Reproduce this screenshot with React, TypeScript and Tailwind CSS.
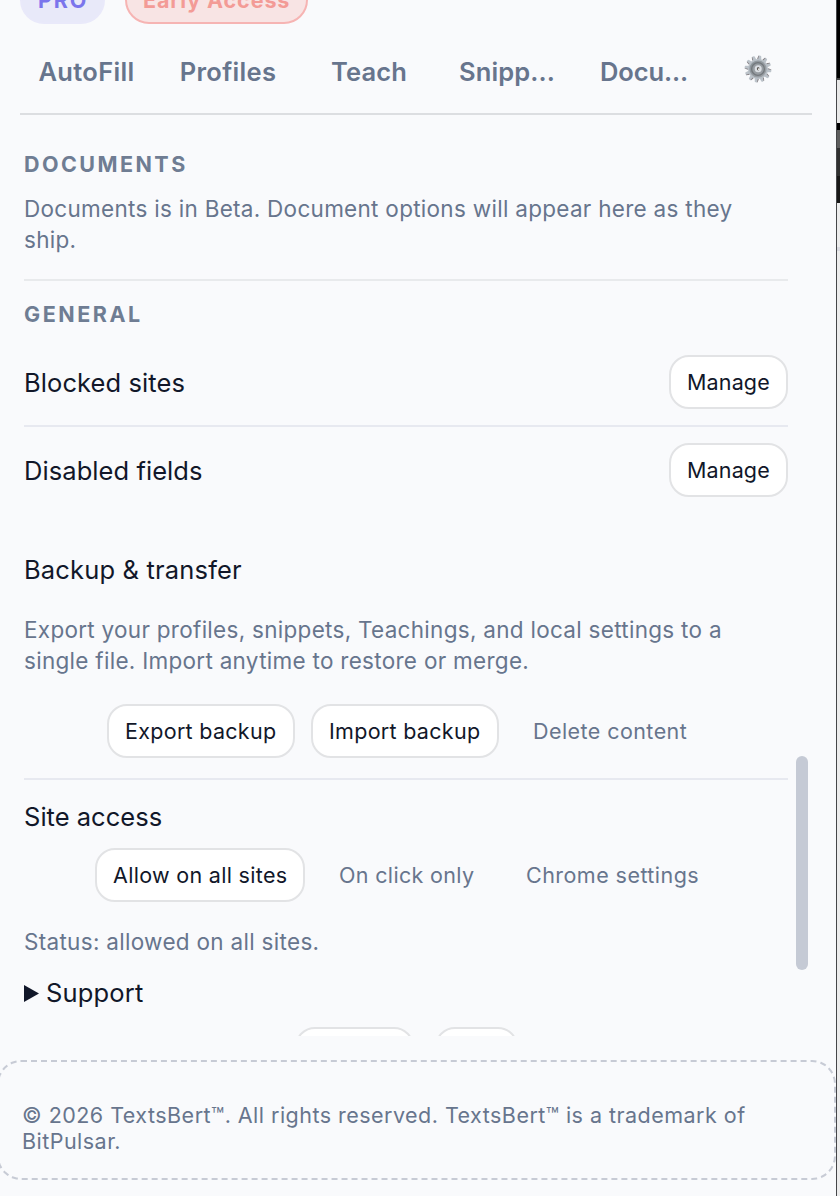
import { ReactNode } from "react";

const tabs = [
  { label: "AutoFill", className: "w-[133px] tracking-[0.32px]" },
  { label: "Profiles", className: "w-[150px] tracking-[0.33px]" },
  { label: "Teach", className: "w-[132px] tracking-[0.13px]" },
  { label: "Snipp...", className: "w-[144px] tracking-[0.11px]" },
  { label: "Docu...", className: "w-[130px] tracking-[-0.08px]" },
];

const teeth = [0, 30, 60, 90, 120, 150, 180, 210, 240, 270, 300, 330];

function GearIcon() {
  return (
    <svg viewBox="0 0 28 28" className="h-7 w-7">
      <defs>
        <linearGradient id="gear" x1="0" y1="0" x2="1" y2="1">
          <stop offset="0" stopColor="#8b949a" />
          <stop offset="1" stopColor="#9da1a6" />
        </linearGradient>
      </defs>
      {teeth.map((angle) => (
        <g key={angle} transform={`rotate(${angle + 8} 14 14)`}>
          <path d="M11.8 5.5 12.6.9Q14 0 15.4.9L16.2 5.5Z" fill="#bcc3ca" />
          <path d="M11.8 4 12.6.9 13.2.7 12.8 4Z" fill="#857f82" />
        </g>
      ))}
      <circle cx="14" cy="14" r="10" fill="#b7bec5" />
      <circle cx="14" cy="14" r="8.6" fill="url(#gear)" />
      <circle cx="14" cy="14" r="6.4" fill="none" stroke="#73787c" strokeWidth="1.3" />
      <circle cx="14" cy="14" r="5" fill="#999ea3" />
      <circle cx="14.2" cy="13.8" r="3.5" fill="#dbdfe4" />
      <ellipse cx="14.2" cy="13.8" rx="1.3" ry="1.8" fill="#5f5b57" />
      <circle cx="14.9" cy="14.2" r="0.9" fill="#f1f1ee" />
    </svg>
  );
}

function Button({ children, className = "" }: { children?: ReactNode; className?: string }) {
  return (
    <button
      type="button"
      className={`flex h-[54px] shrink-0 items-center rounded-[20px] border-2 border-[#e2e3e5] bg-white pl-4 text-[21.5px] whitespace-nowrap text-[#111729] ${className}`}
    >
      {children}
    </button>
  );
}

function GhostButton({ children, className = "" }: { children: ReactNode; className?: string }) {
  return (
    <button
      type="button"
      className={`flex h-[54px] shrink-0 items-center pl-[18px] text-[21.5px] whitespace-nowrap ${className}`}
    >
      {children}
    </button>
  );
}

export default function App() {
  return (
    <div className="flex h-[1196px] w-[840px] overflow-hidden bg-[#f9fafc] font-['Inter',sans-serif] text-[#67758d]">
      <div className="relative flex w-[836px] flex-col overflow-hidden">
        <div className="flex h-6 shrink-0 items-end gap-5 pl-5 text-[21.5px] font-bold">
          <span className="flex h-12 w-[85px] shrink-0 items-center rounded-full border-2 border-[#e9e9fa] bg-[#e8e9f9] pl-4 tracking-[1.9px] text-[#7b75ec]">
            PRO
          </span>
          <span className="flex h-12 w-[183px] shrink-0 items-center rounded-full border-2 border-[#f6b4b3] bg-[#f8e4e4] pl-4 tracking-[0.9px] whitespace-nowrap text-[#f39b96]">
            Early Access
          </span>
        </div>

        <nav className="mx-5 flex h-[91px] w-[792px] shrink-0 items-center border-b-2 border-[#dcdee1] pt-2 text-[25.5px] font-semibold">
          {tabs.map((tab) => (
            <a key={tab.label} className={`text-center ${tab.className}`}>
              {tab.label}
            </a>
          ))}
          <a className="flex w-[97px] justify-center pb-[7px]">
            <GearIcon />
          </a>
        </nav>

        <main className="h-[921px] shrink-0 overflow-hidden pr-12 pl-6">
          <section className="border-b-2 border-[#e8eaec] pt-[34px] pb-6">
            <h2 className="text-[21.5px] leading-[31px] font-bold tracking-[2.45px] text-[#6f7d93]">DOCUMENTS</h2>
            <p className="mt-[13px] text-[22.5px] leading-[31px] tracking-[0.285px]">
              Documents is in Beta. Document options will appear here as they ship.
            </p>
          </section>

          <section className="pt-[18px]">
            <h2 className="text-[21.5px] leading-[31px] font-bold tracking-[2.55px] text-[#6f7d93]">GENERAL</h2>
            <div className="mt-[9px] flex h-[88px] items-center justify-between border-b-2 border-[#e7e9f0]">
              <span className="pt-[2px] text-[25.5px] tracking-[0.09px] text-[#111729]">Blocked sites</span>
              <Button className="w-[119px] tracking-[0.15px]">Manage</Button>
            </div>
            <div className="flex h-[86px] items-center justify-between">
              <span className="pt-[2px] text-[25.5px] tracking-[0.07px] text-[#111729]">Disabled fields</span>
              <Button className="w-[119px] tracking-[0.15px]">Manage</Button>
            </div>
          </section>

          <section className="border-b-2 border-[#e7e9f0] pt-[37px] pb-5">
            <h3 className="text-[25.5px] leading-[40px] tracking-[0.17px] text-[#111729]">Backup &amp; transfer</h3>
            <p className="mt-6 text-[22.5px] leading-[31px] tracking-[0.285px]">
              Export your profiles, snippets, Teachings, and local settings to a single file. Import anytime to restore
              or merge.
            </p>
            <div className="mt-7 flex justify-center gap-4">
              <Button className="w-[188px] tracking-[0.29px]">Export backup</Button>
              <Button className="w-[188px] tracking-[0.29px]">Import backup</Button>
              <GhostButton className="w-[190px] tracking-[0.43px]">Delete content</GhostButton>
            </div>
          </section>

          <section className="pt-[17px]">
            <h3 className="text-[25.5px] leading-[39px] tracking-[0.02px] text-[#111729]">Site access</h3>
            <div className="mt-3 flex justify-center gap-4">
              <Button className="w-[210px] tracking-[0.31px]">Allow on all sites</Button>
              <GhostButton className="w-[171px] tracking-[0.34px]">On click only</GhostButton>
              <GhostButton className="w-[209px] tracking-[0.45px]">Chrome settings</GhostButton>
            </div>
            <p className="mt-6 text-[22.5px] leading-[31px] tracking-[0.3px]">Status: allowed on all sites.</p>
          </section>

          <section className="pt-4 text-[#111729]">
            <div className="flex items-center text-[25.5px] leading-[40px] tracking-[0.17px]">
              <svg viewBox="0 0 15 17" className="mr-[7px] h-[17px] w-[15px]">
                <path d="M0 0 15 8.5 0 17Z" fill="currentColor" />
              </svg>
              Support
            </div>
            <div className="mt-[14px] flex justify-center gap-[21px]">
              <Button className="w-[119px]" />
              <Button className="w-[83px]" />
            </div>
          </section>
        </main>

        <footer className="mt-6 -ml-[3px] h-[120px] w-[839px] shrink-0 rounded-3xl border-2 border-dashed border-[#c7cbd5] pt-10 pr-10 pl-[23px] text-[21.5px] leading-[26px] tracking-[0.47px]">
          © 2026 TextsBert™. All rights reserved. TextsBert™ is a trademark of BitPulsar.
        </footer>

        {/* scrollbar thumb */}
        <div className="absolute top-[756px] right-7 h-[214px] w-3 rounded-full bg-[#c5cad5]" />
      </div>

      {/* page behind the side panel */}
      <div className="flex w-1 flex-col border-l border-[#454649] bg-[#ececec]">
        <div className="h-[78px] bg-black" />
        <div className="h-[2px] bg-[#444]" />
        <div className="h-[43px] bg-[#e8e8e8]" />
        <div className="h-[7px] bg-black" />
        <div className="h-[18px] bg-[#5d5d5d]" />
        <div className="h-[28px] bg-[#303030]" />
        <div className="h-[27px] bg-[#181818]" />
        <div className="mt-11 h-1 bg-[#d9dae0]" />
      </div>
    </div>
  );
}
